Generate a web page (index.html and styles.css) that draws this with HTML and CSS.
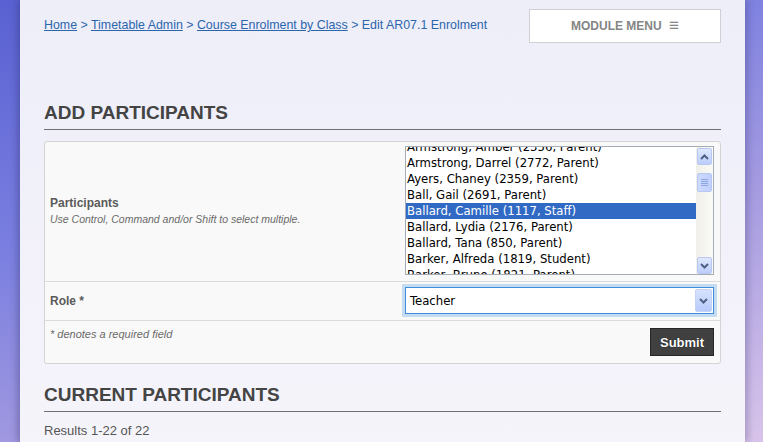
FILE: index.html
```html
<!DOCTYPE html>
<html lang="en">
<head>
  <meta charset="UTF-8">
  <title>Edit AR07.1 Enrolment</title>
  <link rel="stylesheet" href="styles.css">
</head>
<body>
  <div class="page">
    <!-- header -->
    <div class="top-bar">
      <div class="breadcrumb">
        <a href="#">Home</a> &gt; <a href="#">Timetable Admin</a> &gt; <a href="#">Course Enrolment by Class</a> &gt; Edit AR07.1 Enrolment
      </div>
      <div class="module-menu">MODULE MENU <span class="burger">≡</span></div>
    </div>

    <!-- add participants -->
    <h2 class="section-title first">ADD PARTICIPANTS</h2>
    <div class="form-box">
      <div class="form-row tall">
        <div class="form-label">
          <div class="label-name">Participants</div>
          <div class="label-hint">Use Control, Command and/or Shift to select multiple.</div>
        </div>
        <div class="form-field">
          <div class="listbox">
            <div class="list-items">
              <div class="list-item">Armstrong, Amber (2356, Parent)</div>
              <div class="list-item">Armstrong, Darrel (2772, Parent)</div>
              <div class="list-item">Ayers, Chaney (2359, Parent)</div>
              <div class="list-item">Ball, Gail (2691, Parent)</div>
              <div class="list-item selected">Ballard, Camille (1117, Staff)</div>
              <div class="list-item">Ballard, Lydia (2176, Parent)</div>
              <div class="list-item">Ballard, Tana (850, Parent)</div>
              <div class="list-item">Barker, Alfreda (1819, Student)</div>
              <div class="list-item">Barker, Bruno (1821, Parent)</div>
            </div>
            <div class="scrollbar">
              <div class="sb-btn">
                <svg width="9" height="6" viewBox="0 0 9 6"><path d="M1 5 L4.5 1.5 L8 5" fill="none" stroke="#4d6185" stroke-width="2"/></svg>
              </div>
              <div class="sb-track">
                <div class="sb-thumb"><span></span><span></span><span></span><span></span></div>
              </div>
              <div class="sb-btn">
                <svg width="9" height="6" viewBox="0 0 9 6"><path d="M1 1 L4.5 4.5 L8 1" fill="none" stroke="#4d6185" stroke-width="2"/></svg>
              </div>
            </div>
          </div>
        </div>
      </div>
      <div class="form-row">
        <div class="form-label">
          <div class="label-name">Role *</div>
        </div>
        <div class="form-field">
          <div class="select-ring">
            <div class="select-box">
              <span class="select-value">Teacher</span>
              <div class="select-btn">
                <svg width="9" height="6" viewBox="0 0 9 6"><path d="M1 1 L4.5 4.5 L8 1" fill="none" stroke="#4d6185" stroke-width="2"/></svg>
              </div>
            </div>
          </div>
        </div>
      </div>
      <div class="form-row last">
        <div class="form-label">
          <div class="label-hint required">* denotes a required field</div>
        </div>
        <div class="form-field right">
          <button class="submit">Submit</button>
        </div>
      </div>
    </div>

    <!-- current participants -->
    <h2 class="section-title">CURRENT PARTICIPANTS</h2>
    <div class="results">Results 1-22 of 22</div>
  </div>
</body>
</html>
```

FILE: styles.css
```css
html, body { height: 100%; }
body { margin: 0; overflow: hidden; font-family: 'Liberation Sans', Arial, sans-serif; background: linear-gradient(160deg, #5961d2 0%, #7a7fe0 35%, #a59be0 65%, #d8c4ea 100%); }
.page { height: 100%; margin: 0 18px 0 20px; padding: 0 24px; background: linear-gradient(to bottom, #eeeef9, #f5f4fb); box-shadow: -4px 0 6px rgba(40,40,90,0.25), 4px 0 6px rgba(40,40,90,0.2); }

/* header */
.top-bar { display: flex; justify-content: space-between; align-items: flex-start; padding-top: 9px; }
.breadcrumb { font-size: 12.4px; color: #2b66ad; margin-top: 9px; }
.breadcrumb a { color: #2b66ad; }
.module-menu { width: 190px; height: 32px; line-height: 32px; border: 1px solid #cfcfd4; background: #fff; text-align: center; font-size: 12px; font-weight: bold; color: #858585; }
.burger { font-size: 17px; font-weight: normal; margin-left: 4px; vertical-align: -1px; }

/* section titles */
.section-title { margin: 0; font-size: 19px; line-height: 22px; font-weight: bold; color: #444; letter-spacing: 0; padding-bottom: 5px; border-bottom: 1px solid #6f6f74; }
.section-title.first { margin-top: 59px; }

/* form */
.form-box { margin-top: 11px; background: #f9f9f9; border: 1px solid #d4d4d4; border-radius: 3px; }
.form-row { display: grid; grid-template-columns: 355px 1fr; align-items: center; border-bottom: 1px solid #dcdcdc; padding: 2px 6px 3px 5px; }
.form-row.tall { padding: 4px 6px 6px 5px; }
.form-row.last { border-bottom: none; align-items: start; padding: 7px 6px 7px 5px; }
.label-name { font-size: 12px; font-weight: bold; color: #5a5a5a; }
.label-hint { font-size: 10.5px; font-style: italic; color: #6a6a6a; margin-top: 3px; }
.label-hint.required { font-size: 11px; margin-top: 0; }
.form-field.right { display: flex; justify-content: flex-end; }

/* listbox */
.listbox { display: flex; height: 127px; border: 1px solid #a5acb5; background: #fff; overflow: hidden; }
.list-items { flex: 1; margin-top: -8px; font-family: 'DejaVu Sans', sans-serif; font-size: 11.7px; color: #000; }
.list-item { height: 16px; line-height: 16px; padding-left: 1px; white-space: nowrap; }
.list-item.selected { background: #316ac5; color: #fff; }
.scrollbar { width: 17px; display: flex; flex-direction: column; background: linear-gradient(to right, #f0efe8, #fbfbf7); padding-top: 1px; }
.sb-btn { height: 17px; margin: 0 1px; display: flex; align-items: center; justify-content: center; border: 1px solid #b7c8f3; border-radius: 2px; background: linear-gradient(to bottom, #dfe8fe, #bccdfb); box-sizing: border-box; }
.sb-track { flex: 1; padding-top: 8px; }
.sb-thumb { height: 19px; margin: 0 1px; border: 1px solid #b7c8f3; border-radius: 2px; background: linear-gradient(to right, #cddafd, #c0d0fb); box-sizing: border-box; display: flex; flex-direction: column; align-items: center; justify-content: center; gap: 1px; }
.sb-thumb span { width: 7px; height: 1px; background: #8ea5e4; }

/* select */
.select-ring { padding: 3px; background: #c3dcf2; border-radius: 1px; margin: 0 -3px; }
.select-box { display: flex; align-items: center; height: 27px; border: 1px solid #3b8fdc; background: #fff; box-sizing: border-box; }
.select-value { flex: 1; font-family: 'DejaVu Sans Condensed', 'DejaVu Sans', sans-serif; font-size: 13px; padding-left: 4px; }
.select-btn { width: 17px; height: 23px; margin-right: 1px; display: flex; align-items: center; justify-content: center; border-radius: 2px; background: linear-gradient(to bottom, #d6e2fe, #b8cafa); border: 1px solid #c3d2f7; box-sizing: border-box; }

/* submit */
.submit { width: 64px; height: 28px; border: 1px solid #262626; background: #404040; color: #fff; font-family: 'Liberation Sans', Arial, sans-serif; font-size: 13px; font-weight: bold; text-shadow: 0 0 1px #000; cursor: pointer; padding: 0; }

/* results */
.section-title + .results { margin-top: 11px; }
.results { font-size: 13px; color: #555; }
.form-box + .section-title { margin-top: 20px; }
```
